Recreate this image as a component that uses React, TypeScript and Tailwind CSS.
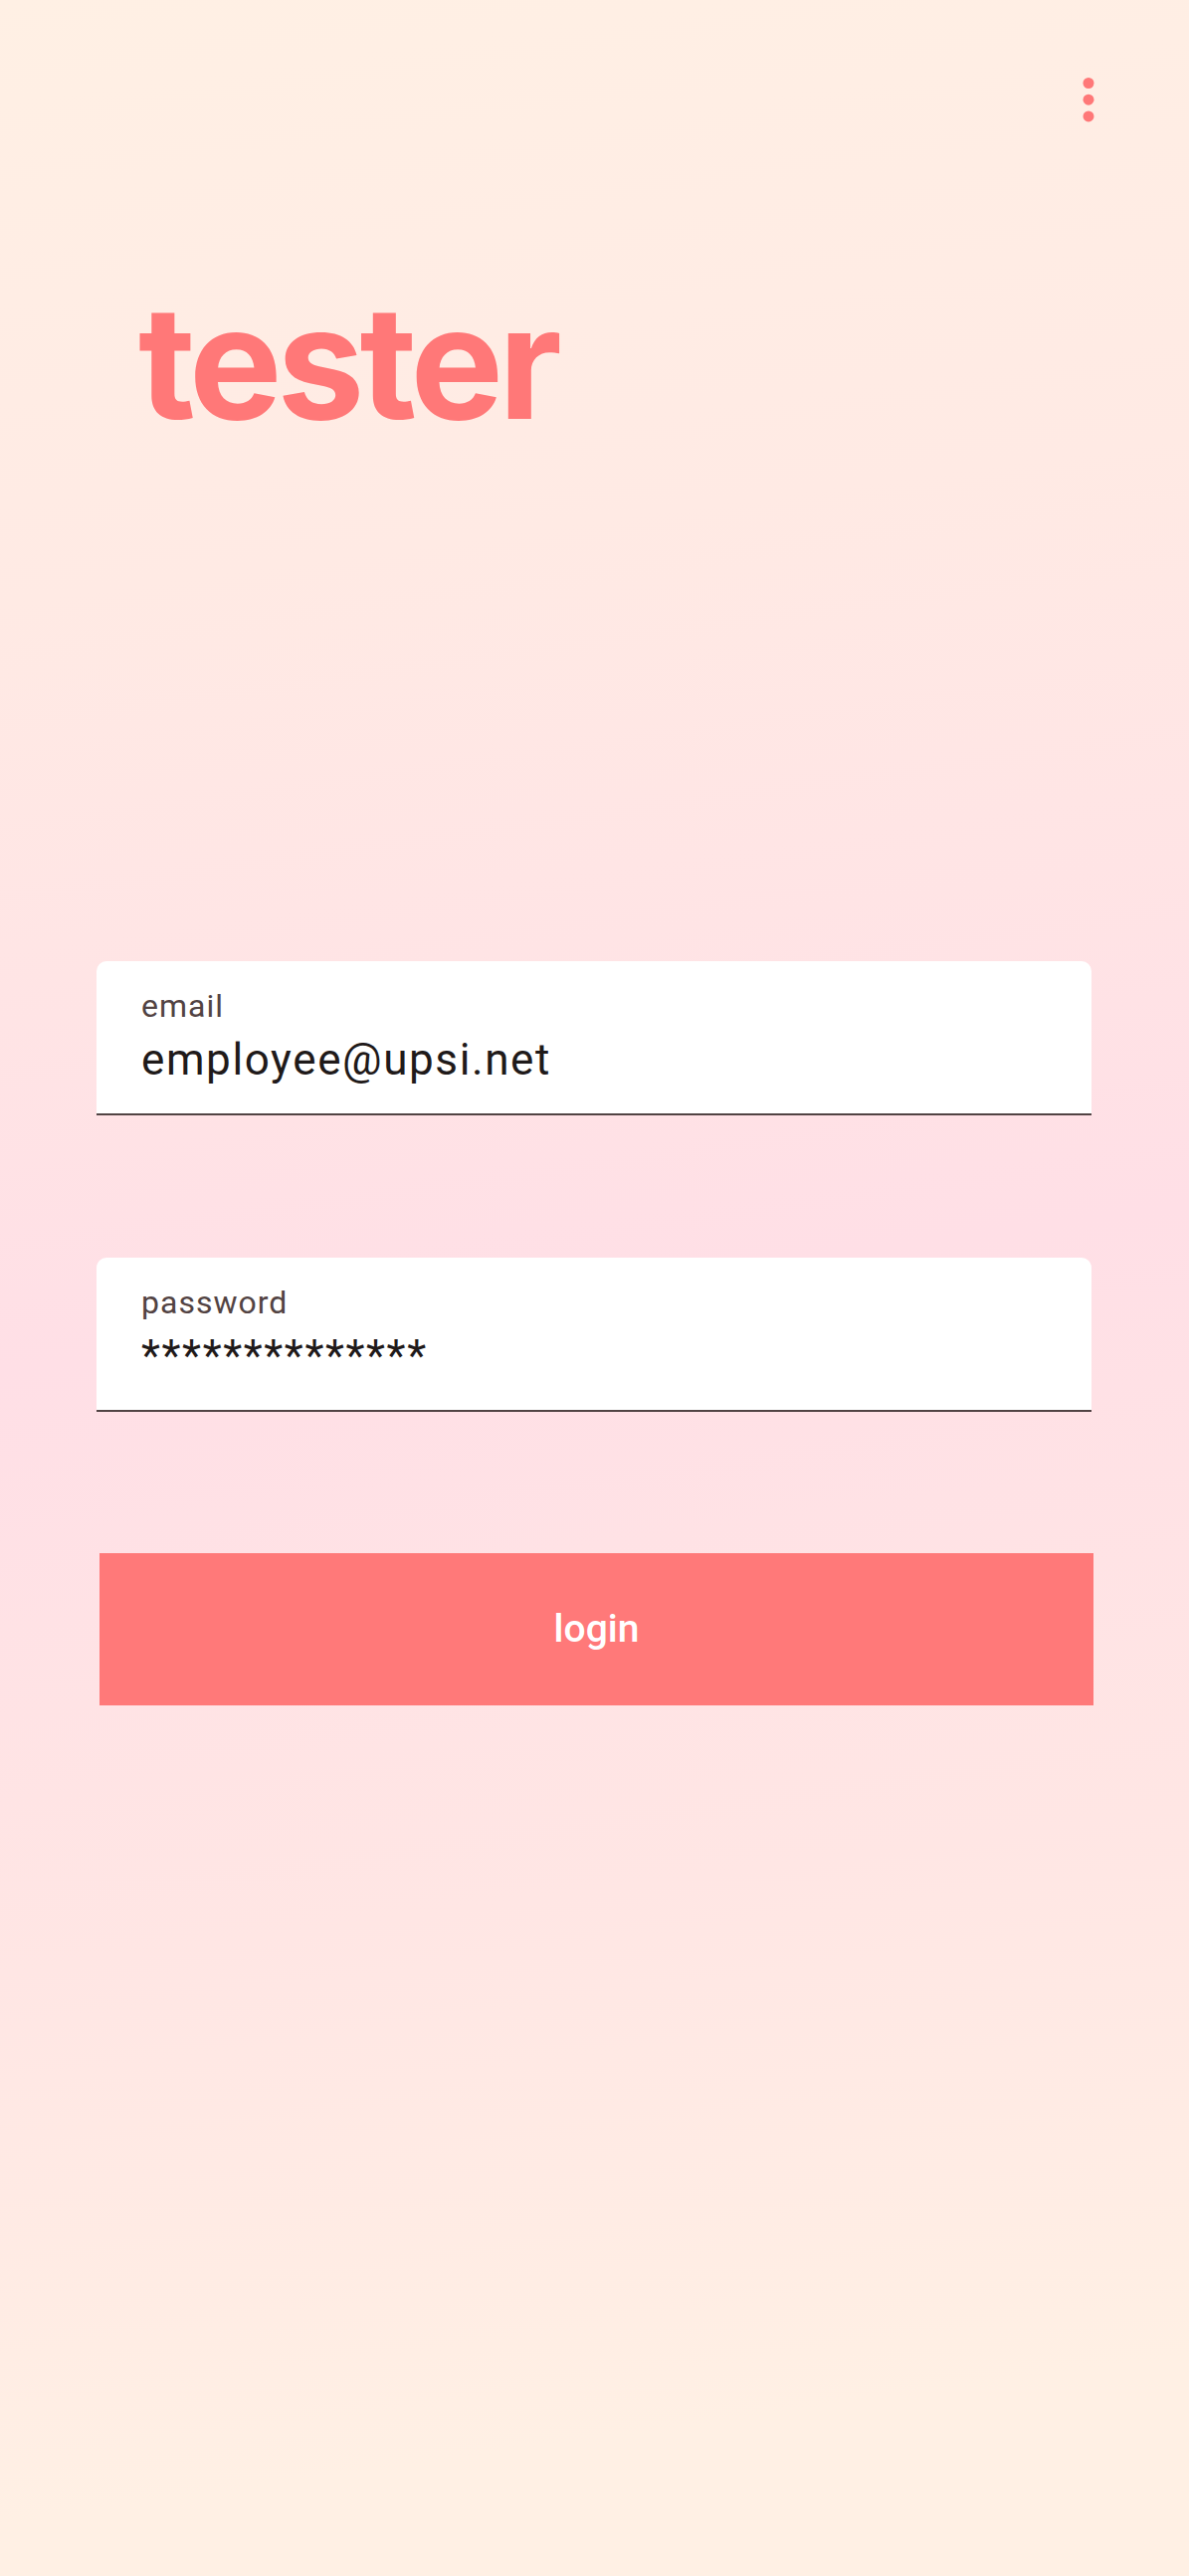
import React from 'react';

const Field: React.FC<{ label: string; value: string }> = ({ label, value }) => (
  <div className="ml-[97px] w-[1000px] h-[155px] bg-white rounded-t-[10px] border-b-2 border-[#514343] pl-[45px] pt-[29px]">
    <div className="text-[32px] leading-none tracking-[1px] text-[#524343]">{label}</div>
    <div className="mt-[16px] text-[44px] leading-none tracking-[1.6px] text-[#1f1a1a]">{value}</div>
  </div>
);

const App: React.FC = () => (
  <div className="min-h-[2589px] w-full font-['Roboto',sans-serif] bg-[linear-gradient(172deg,#fff0e4_0%,#ffeae4_22%,#ffdfe6_50%,#ffe6e4_72%,#fff0e4_92%)]">
    {/* Overflow menu */}
    <div className="flex justify-end pt-[78px] pr-[95px]">
      <svg width="12" height="45" viewBox="0 0 12 45" aria-label="more">
        <circle cx="6" cy="5.5" r="5.5" fill="#ff7878" />
        <circle cx="6" cy="22.2" r="5.5" fill="#ff7878" />
        <circle cx="6" cy="38.9" r="5.5" fill="#ff7878" />
      </svg>
    </div>

    {/* Title */}
    <h1 className="mt-[163px] pl-[139px] font-['Inter',sans-serif] font-bold text-[157px] leading-none tracking-[-5px] text-[#ff7878]">
      tester
    </h1>

    <div className="mt-[523px]">
      <Field label="email" value="employee@upsi.net" />
    </div>
    <div className="mt-[143px]">
      <Field label="password" value="**************" />
    </div>

    <button className="mt-[142px] ml-[100px] w-[999px] h-[153px] bg-[#ff7979] flex items-center justify-center text-white text-[39px] font-medium">
      login
    </button>
  </div>
);

export default App;
